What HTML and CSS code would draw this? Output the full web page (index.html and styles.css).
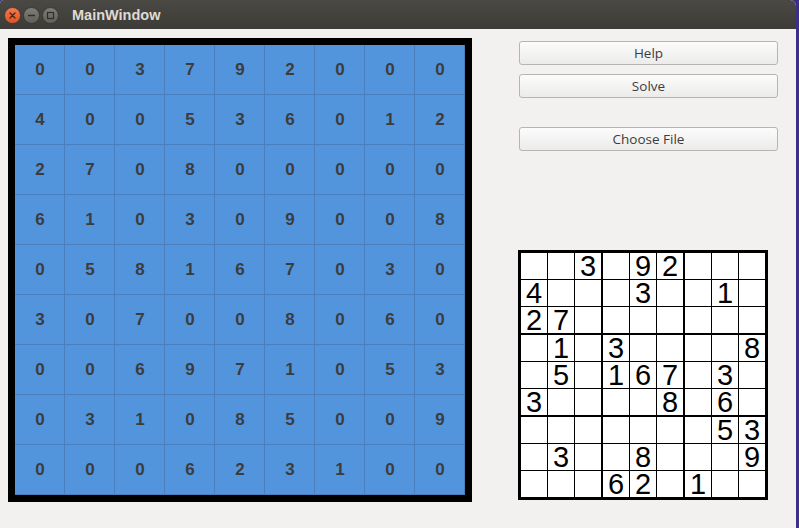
FILE: index.html
```html
<!DOCTYPE html>
<html>
<head>
<meta charset="utf-8">
<link rel="stylesheet" href="styles.css">
</head>
<body>
<div class="desk">
<div class="window">
  <div class="titlebar">
    <div class="controls">
      <svg class="wbtn" width="17" height="17" viewBox="0 0 17 17">
        <defs><linearGradient id="gc" x1="0" y1="0" x2="0" y2="1"><stop offset="0" stop-color="#f47a4e"/><stop offset="1" stop-color="#e4501f"/></linearGradient></defs>
        <circle cx="8.5" cy="8.5" r="8" fill="url(#gc)" stroke="#3a3935" stroke-width="0.8"/>
        <path d="M6 6 L11 11 M11 6 L6 11" stroke="#3b2a22" stroke-width="1.3" stroke-linecap="round"/>
      </svg>
      <svg class="wbtn" width="17" height="17" viewBox="0 0 17 17">
        <defs><linearGradient id="gm" x1="0" y1="0" x2="0" y2="1"><stop offset="0" stop-color="#7f7e79"/><stop offset="1" stop-color="#5f5e5a"/></linearGradient></defs>
        <circle cx="8.5" cy="8.5" r="8" fill="url(#gm)" stroke="#34332f" stroke-width="0.8"/>
        <path d="M5 8.5 L12 8.5" stroke="#2f2e2b" stroke-width="1.3"/>
      </svg>
      <svg class="wbtn" width="17" height="17" viewBox="0 0 17 17">
        <circle cx="8.5" cy="8.5" r="8" fill="url(#gm)" stroke="#34332f" stroke-width="0.8"/>
        <rect x="5.5" y="5.5" width="6" height="6" fill="none" stroke="#2f2e2b" stroke-width="1.2"/>
      </svg>
    </div>
    <span class="title">MainWindow</span>
  </div>
  <div class="content">
    <div class="board">
      <div class="c">0</div><div class="c">0</div><div class="c">3</div><div class="c">7</div><div class="c">9</div><div class="c">2</div><div class="c">0</div><div class="c">0</div><div class="c">0</div>
      <div class="c">4</div><div class="c">0</div><div class="c">0</div><div class="c">5</div><div class="c">3</div><div class="c">6</div><div class="c">0</div><div class="c">1</div><div class="c">2</div>
      <div class="c">2</div><div class="c">7</div><div class="c">0</div><div class="c">8</div><div class="c">0</div><div class="c">0</div><div class="c">0</div><div class="c">0</div><div class="c">0</div>
      <div class="c">6</div><div class="c">1</div><div class="c">0</div><div class="c">3</div><div class="c">0</div><div class="c">9</div><div class="c">0</div><div class="c">0</div><div class="c">8</div>
      <div class="c">0</div><div class="c">5</div><div class="c">8</div><div class="c">1</div><div class="c">6</div><div class="c">7</div><div class="c">0</div><div class="c">3</div><div class="c">0</div>
      <div class="c">3</div><div class="c">0</div><div class="c">7</div><div class="c">0</div><div class="c">0</div><div class="c">8</div><div class="c">0</div><div class="c">6</div><div class="c">0</div>
      <div class="c">0</div><div class="c">0</div><div class="c">6</div><div class="c">9</div><div class="c">7</div><div class="c">1</div><div class="c">0</div><div class="c">5</div><div class="c">3</div>
      <div class="c">0</div><div class="c">3</div><div class="c">1</div><div class="c">0</div><div class="c">8</div><div class="c">5</div><div class="c">0</div><div class="c">0</div><div class="c">9</div>
      <div class="c">0</div><div class="c">0</div><div class="c">0</div><div class="c">6</div><div class="c">2</div><div class="c">3</div><div class="c">1</div><div class="c">0</div><div class="c">0</div>
    </div>
    <div class="side">
      <button class="btn">Help</button>
      <button class="btn">Solve</button>
      <button class="btn btn-file">Choose File</button>
      <div class="puzzle">
        <div class="p"></div><div class="p"></div><div class="p br">3</div><div class="p"></div><div class="p">9</div><div class="p br">2</div><div class="p"></div><div class="p"></div><div class="p"></div>
        <div class="p">4</div><div class="p"></div><div class="p br"></div><div class="p"></div><div class="p">3</div><div class="p br"></div><div class="p"></div><div class="p">1</div><div class="p"></div>
        <div class="p bb">2</div><div class="p bb">7</div><div class="p br bb"></div><div class="p bb"></div><div class="p bb"></div><div class="p br bb"></div><div class="p bb"></div><div class="p bb"></div><div class="p bb"></div>
        <div class="p"></div><div class="p">1</div><div class="p br"></div><div class="p">3</div><div class="p"></div><div class="p br"></div><div class="p"></div><div class="p"></div><div class="p">8</div>
        <div class="p"></div><div class="p">5</div><div class="p br"></div><div class="p">1</div><div class="p">6</div><div class="p br">7</div><div class="p"></div><div class="p">3</div><div class="p"></div>
        <div class="p bb">3</div><div class="p bb"></div><div class="p br bb"></div><div class="p bb"></div><div class="p bb"></div><div class="p br bb">8</div><div class="p bb"></div><div class="p bb">6</div><div class="p bb"></div>
        <div class="p"></div><div class="p"></div><div class="p br"></div><div class="p"></div><div class="p"></div><div class="p br"></div><div class="p"></div><div class="p">5</div><div class="p">3</div>
        <div class="p"></div><div class="p">3</div><div class="p br"></div><div class="p"></div><div class="p">8</div><div class="p br"></div><div class="p"></div><div class="p"></div><div class="p">9</div>
        <div class="p"></div><div class="p"></div><div class="p br"></div><div class="p">6</div><div class="p">2</div><div class="p br"></div><div class="p">1</div><div class="p"></div><div class="p"></div>
      </div>
    </div>
  </div>
</div>
</div>
</body>
</html>
```
FILE: styles.css
```css
html, body {
  margin: 0;
  padding: 0;
}
body {
  width: 799px;
  height: 528px;
  overflow: hidden;
  background: #f2f1f0;
}
.desk {
  display: flex;
  height: 528px;
  background: #3b2f86;
}
.window {
  width: 796px;
  height: 528px;
  background: #f2f1f0;
  border-top-right-radius: 6px;
  border-top-left-radius: 4px;
  overflow: hidden;
}
.titlebar {
  height: 29px;
  display: flex;
  align-items: center;
  background: linear-gradient(#4a4944, #3c3b37);
  font-family: "Liberation Sans", Arial, sans-serif;
}
.controls {
  display: flex;
  gap: 2px;
  padding-left: 4px;
  padding-top: 1px;
}
.wbtn {
  display: block;
  width: 17px;
  height: 17px;
}
.title {
  margin-left: 13px;
  color: #dfdbd2;
  font-weight: bold;
  font-size: 14.5px;
}
.content {
  display: flex;
  padding: 9px 0 0 8px;
}
.board {
  display: grid;
  grid-template-columns: repeat(9, 50px);
  grid-template-rows: repeat(9, 50px);
  border: 7px solid #000;
  background: #5295dc;
}
.c {
  box-sizing: border-box;
  border-right: 1px solid #4a7fbc;
  border-bottom: 1px solid #4a7fbc;
  display: flex;
  align-items: center;
  justify-content: center;
  padding-left: 1px;
  padding-top: 1px;
  font-family: "Liberation Sans", Arial, sans-serif;
  font-weight: bold;
  font-size: 17px;
  color: #3c3c3c;
}
.side {
  margin-left: 46px;
  padding-top: 3px;
  display: flex;
  flex-direction: column;
  align-items: flex-start;
}
.btn {
  margin: 0 0 9px 1px;
  width: 259px;
  height: 24px;
  box-sizing: border-box;
  border: 1px solid #b6b5b1;
  border-radius: 3px;
  background: linear-gradient(#fcfcfc, #ebebea);
  font-family: "Open Sans", "Noto Sans", sans-serif;
  font-size: 13.5px;
  color: #3c3c3c;
  padding: 0;
  line-height: 20px;
}
.btn-file {
  margin-top: 20px;
}
.puzzle {
  margin-top: 90px;
  display: grid;
  grid-template-columns: 26px 26px 27px 26px 26px 27px 26px 26px 26px;
  grid-template-rows: 26px 26px 27px 26px 26px 27px 26px 26px 26px;
  gap: 1px;
  padding: 3px;
  background: #000;
}
.p {
  box-sizing: border-box;
  background: #fff;
  font-family: "Liberation Sans", Arial, sans-serif;
  font-size: 29px;
  line-height: 26px;
  text-align: center;
  color: #000;
}
.br {
  border-right: 1px solid #000;
}
.bb {
  border-bottom: 1px solid #000;
}
```
